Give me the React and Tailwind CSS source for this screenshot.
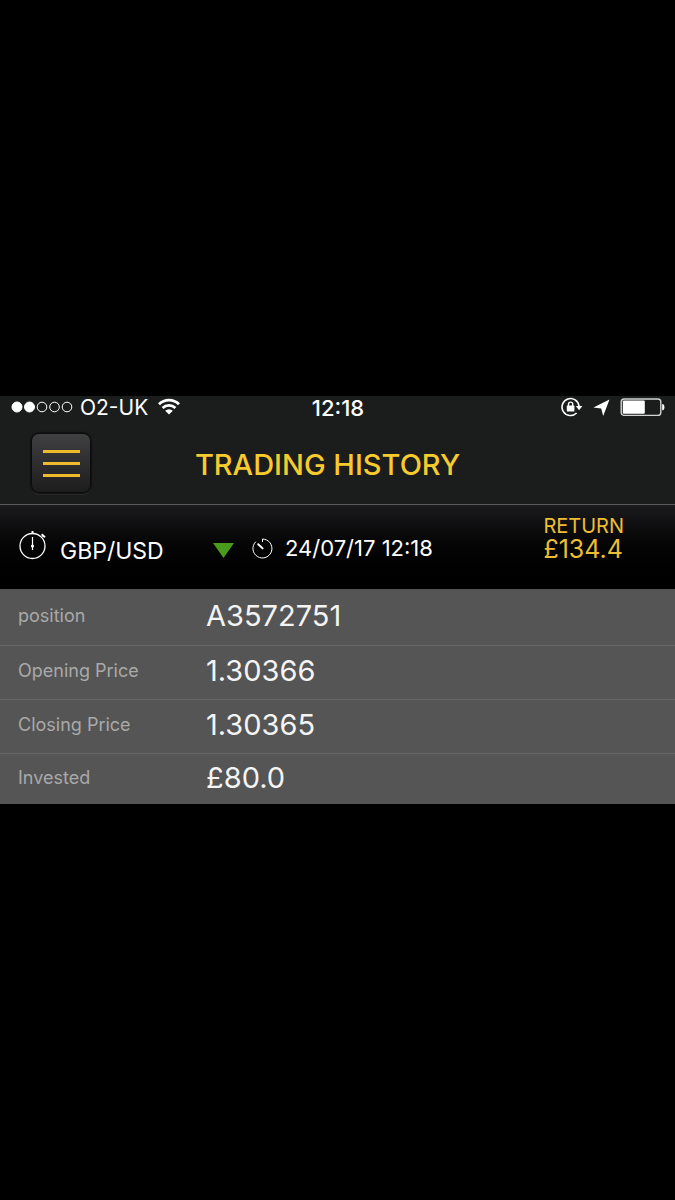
const details = [
  { label: "position", value: "A3572751", row: "h-14" },
  { label: "Opening Price", value: "1.30366", row: "h-[54px]" },
  { label: "Closing Price", value: "1.30365", row: "h-[54px]" },
  { label: "Invested", value: "£80.0", row: "h-[51px]" },
];

function SignalDots() {
  return (
    <svg width="62" height="14" viewBox="0 0 62 14" fill="none" stroke="#fff" aria-hidden="true">
      <circle cx="6" cy="6" r="5" fill="#fff" />
      <circle cx="18.5" cy="6" r="5" fill="#fff" />
      <circle cx="31" cy="6" r="4.8" />
      <circle cx="43.5" cy="6" r="4.8" />
      <circle cx="56" cy="6" r="4.8" />
    </svg>
  );
}

function WifiIcon() {
  return (
    <svg width="22" height="20" viewBox="0 0 22 20" fill="none" stroke="#fff" strokeWidth="2.8" aria-hidden="true">
      <path d="M1 6.2a14.2 14.2 0 0 1 20 0" />
      <path d="M4.6 10a9.1 9.1 0 0 1 12.8 0" />
      <path d="M11 16.5 7.200 12.800a5.400 5.400 0 0 1 7.600 0Z" fill="#fff" stroke="none" />
    </svg>
  );
}

function RotationLockIcon() {
  return (
    <svg width="22" height="22" viewBox="0 0 22 22" fill="none" stroke="#fff" aria-hidden="true">
      <path d="M18 9.2A8.5 8.5 0 1 0 15.6 16" strokeWidth="1.6" />
      <path d="M14.8 9h6.6l-3.3 4.2Z" fill="#fff" stroke="none" />
      <rect x="5.800" y="8.600" width="7.600" height="6" rx="0.6" fill="#fff" stroke="none" />
      <path d="M7.500 9V7.200a2.100 2.100 0 0 1 4.200 0V9" strokeWidth="1.4" />
    </svg>
  );
}

function LocationIcon() {
  return (
    <svg width="17" height="19" viewBox="0 0 17 19" fill="#fff" aria-hidden="true">
      <path d="M16.5.5 10.200 17 8.200 9.600.400 8.400Z" />
    </svg>
  );
}

function BatteryIcon() {
  return (
    <svg width="45" height="20" viewBox="0 0 45 20" aria-hidden="true">
      <rect x="1.2" y="1" width="39.6" height="16.4" rx="3" fill="none" stroke="#d4d4d4" strokeWidth="1.4" />
      <rect x="2.8" y="2.6" width="22" height="13.2" rx="1" fill="#fff" />
      <path d="M42.2 6.100c1.400 0 2.200 1.200 2.200 3.100s-.8 3.100-2.200 3.100Z" fill="#fff" />
    </svg>
  );
}

function StopwatchIcon() {
  return (
    <svg width="28" height="30" viewBox="0 0 28 30" fill="none" stroke="#fff" aria-hidden="true">
      <circle cx="13.5" cy="16" r="12.5" strokeWidth="1.3" />
      <path d="M13.5 1v3" strokeWidth="2" />
      <path d="M22.6 4.2l3.4 3" strokeWidth="2" />
      <path d="M23.6 6.4l-1.6 1.7" />
      <path d="M13.5 7v13" strokeWidth="1.2" />
      <circle cx="13.5" cy="16" r="1.6" fill="#fff" stroke="none" />
    </svg>
  );
}

function TimerIcon() {
  return (
    <svg width="21" height="21" viewBox="0 0 21 21" fill="none" stroke="#fff" aria-hidden="true">
      <path d="M10.5 4V1a9.5 9.5 0 1 1-6.7 2.7" />
      <path d="M6.2 6.2l4.4 4.2" strokeWidth="2" strokeLinecap="round" />
    </svg>
  );
}

function StatusBar() {
  return (
    <div className="grid h-6 grid-cols-[1fr_auto_1fr] items-center pl-[11px] pr-[10px] text-[21px] leading-6">
      <div className="flex items-center">
        <SignalDots />
        <span className="ml-[7px] mr-[10px]">O2-UK</span>
        <WifiIcon />
      </div>
      <span className="text-[22px] font-medium">12:18</span>
      <div className="flex items-center justify-end gap-[10px]">
        <RotationLockIcon />
        <LocationIcon />
        <BatteryIcon />
      </div>
    </div>
  );
}

function Header() {
  return (
    <header className="border-b border-[#5c5c5c] bg-[#1b1c1c]">
      <StatusBar />
      <div className="flex h-21 items-center pl-[31px] pt-0.5">
        <button
          type="button"
          aria-label="Menu"
          className="flex size-[60px] flex-col items-center justify-center gap-[9px] rounded-lg border border-[#0c0c0c] bg-linear-to-b from-[#404042] to-[#1d1d1e] shadow-[0_0_1px_1px_#111111,0_2px_0_#2c2c2c]"
        >
          <span className="h-[3px] w-[37px] bg-[#efbb2c]" />
          <span className="h-[3px] w-[37px] bg-[#efbb2c]" />
          <span className="h-[3px] w-[37px] bg-[#efbb2c]" />
        </button>
        <h1 className="flex-1 pr-[111px] pt-1 text-center text-[29px] font-medium leading-8 text-[#f7cb2d]">
          TRADING HISTORY
        </h1>
      </div>
    </header>
  );
}

function TradeSummary() {
  return (
    <section className="flex h-21 items-start bg-linear-to-b from-[#1b1b1d] to-black pl-[19px] pr-[51px]">
      <div className="flex w-[194px] items-center gap-[13px] pt-[18px]">
        <StopwatchIcon />
        <span className="pt-3 text-[23px] leading-8">GBP/USD</span>
      </div>
      <div className="flex flex-1 items-center pt-[27px]">
        <svg width="21" height="15" viewBox="0 0 21 15" className="mt-1" aria-hidden="true">
          <path d="M0 0h21L10.5 15Z" fill="#4a9a1c" />
        </svg>
        <span className="ml-[18px]">
          <TimerIcon />
        </span>
        <time className="ml-3 text-[22px] leading-8">24/07/17 12:18</time>
      </div>
      <div className="pt-[10px] text-[#edbd33]">
        <div className="text-xl leading-[22px]">RETURN</div>
        <div className="text-[25px] leading-6">£134.4</div>
      </div>
    </section>
  );
}

function TradeDetails() {
  return (
    <table className="w-full border-collapse bg-[#555555] text-left">
      <tbody>
        {details.map(({ label, value, row }) => (
          <tr key={label} className={`${row} border-b border-[#686868] last:border-b-0`}>
            <th scope="row" className="w-[206px] pl-[18px] pb-0.5 text-lg font-normal leading-6 text-[#a9a9a9]">
              {label}
            </th>
            <td className="pb-0.5 text-[29px] leading-9 text-[#f4f4f4]">{value}</td>
          </tr>
        ))}
      </tbody>
    </table>
  );
}

export default function App() {
  return (
    <div className="flex min-h-screen flex-col justify-center bg-black font-['Inter',sans-serif] text-white">
      <main>
        <Header />
        <TradeSummary />
        <TradeDetails />
      </main>
    </div>
  );
}
